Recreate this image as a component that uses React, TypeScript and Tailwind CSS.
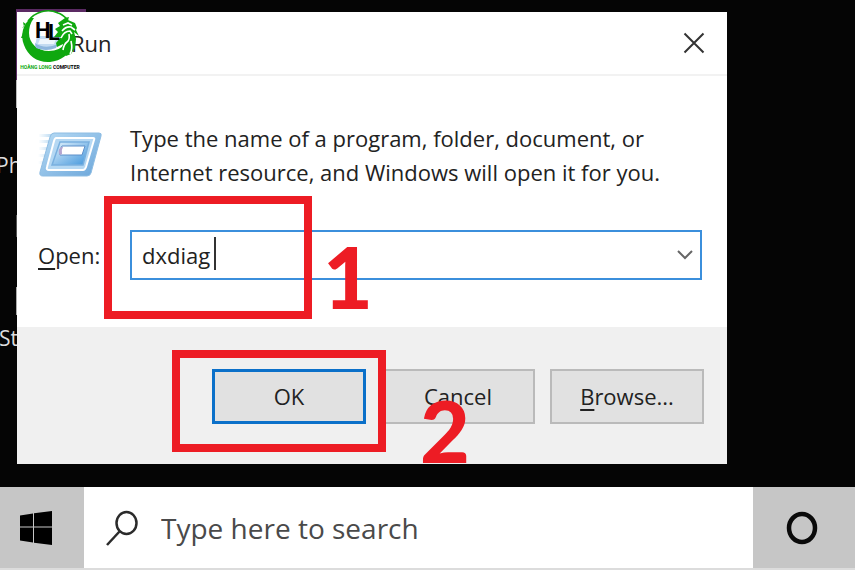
import { useState } from "react";
import type { ReactNode } from "react";

/** Green ring with the dragon head and the shop's initials. */
function ShopLogo() {
  return (
    <div className="pointer-events-none absolute left-[20px] top-[9px] z-20 flex w-[60px] flex-col items-center">
      <svg viewBox="0 0 60 54" className="h-[54px] w-[60px]" role="img" aria-label="Hoàng Long Computer">
        {/* ring */}
        <circle cx="29" cy="27" r="25" fill="#fff" />
        <path
          d="M11 9C3 15 0 26 4 36c4 11 14 18 26 17 11-1 20-8 23-18l-7-1c-4 5-10 8-17 8C17 42 9 34 9 24c0-5 1-10 5-15z"
          fill="#0fa80f"
        />
        <path d="M8 12C15 3 27-1 38 4c4 1 7 4 10 7" fill="none" stroke="#0fa80f" strokeWidth="1.500" />
        <path d="M6 15l-3-2 1 5-2 1zM3 24l-2 5 3 0z" fill="#0fa80f" />
        {/* Run icon showing through the ring */}
        <path d="M17 27h24l-4 10q-9 7-22 0z" fill="#c3dbf1" />
        <path d="M15 34q10 7 23 1l-2 4q-10 4-20 0z" fill="#8db6dd" />
        <path d="M20 30h16l-2 5H18z" fill="#eef6fc" />
        {/* dragon */}
        <path
          d="M38 14l7-5 4-1-1 3 7 3 2 5-1 2 3 6-5-4 2 7-1 9-4 6-5 2-5-4 2-8-6 3-1-4 5-6-7 0 4-5-3-3 5-3z"
          fill="#0fa80f"
        />
        <path
          d="M43 16l5-2 4 2M42 22q4-5 9-4l4 3M41 29q3-7 9-7l2 3M43 41q1-6 4-8t2-8M50 45q3-5 1-13"
          fill="none"
          stroke="#fff"
          strokeWidth="1.600"
        />
        {/* initials */}
        <text x="15" y="29" fontFamily="Liberation Sans Narrow, Roboto, sans-serif" fontSize="22" fontWeight="700" fill="#000">
          H
        </text>
        <text x="28" y="31" fontFamily="Liberation Sans Narrow, Roboto, sans-serif" fontSize="22" fontWeight="700" fill="#000">
          L
        </text>
      </svg>
      <span className="whitespace-nowrap font-['Liberation_Sans_Narrow',Roboto,sans-serif] text-[5px] font-bold leading-[8px] text-black">
        <span className="text-[#0fa80f]">HOÀNG LONG</span> COMPUTER
      </span>
    </div>
  );
}

function RunIcon() {
  return (
    <svg viewBox="0 0 64 48" className="h-[48px] w-[64px] shrink-0" aria-hidden="true">
      <defs>
        <linearGradient id="frame" x1="0" y1="0" x2="1" y2="1">
          <stop offset="0" stopColor="#b9dcf5" />
          <stop offset="1" stopColor="#6ba6da" />
        </linearGradient>
        <linearGradient id="panel" x1="0" y1="0" x2="1" y2="1">
          <stop offset="0" stopColor="#e6f3fc" />
          <stop offset="1" stopColor="#3f95dc" />
        </linearGradient>
        <linearGradient id="trail" x1="0" y1="0" x2="1" y2="0">
          <stop offset="0" stopColor="#a9d2f0" stopOpacity="0" />
          <stop offset="1" stopColor="#8abfe6" />
        </linearGradient>
      </defs>
      <path d="M1 3h20v3H1zM1 9h18v3H1zM1 16h16v3H1zM0 23h14v3H0zM0 30h10v3H0z" fill="url(#trail)" />
      <path d="M16 2h45q3 0 2 3L53 42q-1 3-4 3H5q-4 0-3-4L12 6q1-4 4-4z" fill="url(#frame)" stroke="#8ebde3" />
      <path d="M18 7h37q2 0 1 2L48 36q-1 3-3 3H11q-3 0-2-3l7-26q1-3 2-3z" fill="#b5d8f3" stroke="#fff" strokeWidth="2" />
      <path d="M22 11h29l-6 23H14z" fill="url(#panel)" stroke="#79b0df" strokeWidth="1.500" />
      <path d="M24 15h23l-3 9H22q-2-4 2-9z" fill="#fff" stroke="#5d8fc9" />
      <path d="M23 16q-4 4-1 8l2-1q-1-4 1-7z" fill="#b4a5d0" />
    </svg>
  );
}

function DialogButton({ children, primary = false }: { children: ReactNode; primary?: boolean }) {
  return (
    <button
      type="button"
      className={`h-[55px] w-[154px] bg-[#e1e1e1] text-[22px] text-[#222] ${
        primary ? "border-3 border-[#0b70c9]" : "border-2 border-[#bababa]"
      }`}
    >
      {children}
    </button>
  );
}

function RunDialog() {
  const [command, setCommand] = useState("dxdiag");

  return (
    <section role="dialog" aria-label="Run" className="relative z-10 min-w-0 flex-1 bg-white text-[#222]">
      <header className="flex h-[64px] items-center justify-between border-b-2 border-[#f2f2f2] pl-[54px] pr-[22px]">
        <h1 className="text-[22px]">Run</h1>
        <button type="button" aria-label="Close">
          <svg viewBox="0 0 22 22" className="h-[22px] w-[22px]" fill="none" stroke="#333" strokeWidth="2">
            <path d="M1.500 1.500l19 19M20.500 1.500l-19 19" />
          </svg>
        </button>
      </header>

      <div className="px-[21px] pb-[47px] pt-[45px]">
        <div className="flex items-center gap-[28px]">
          <RunIcon />
          <p className="text-[22px] leading-[34px]">
            Type the name of a program, folder, document, or
            <br />
            Internet resource, and Windows will open it for you.
          </p>
        </div>
        <div className="mt-[41px] flex items-center pr-[4px]">
          <label htmlFor="command" className="w-[92px] shrink-0 text-[22px]">
            <u className="underline-offset-4">O</u>pen:
          </label>
          <div className="relative flex h-[50px] min-w-0 flex-1 items-center border-2 border-[#3b8fdc] bg-white">
            <input
              id="command"
              value={command}
              onChange={(e) => setCommand(e.target.value)}
              className="min-w-0 flex-1 bg-transparent pl-[10px] text-[22px] outline-none"
            />
            <span className="absolute left-[82px] top-[5px] h-[33px] w-[2px] bg-[#333]" />
            <button type="button" aria-label="Show recent commands" className="px-[7px]">
              <svg viewBox="0 0 16 10" className="h-[10px] w-[16px]" fill="none" stroke="#666" strokeWidth="2">
                <path d="M1 1l7 7 7-7" />
              </svg>
            </button>
            {/* step 1 */}
            <div className="pointer-events-none absolute -left-[28px] -top-[36px] h-[123px] w-[208px] border-8 border-[#ed1c24]" />
            <span className="pointer-events-none absolute left-[191px] top-0 font-[Lato] text-[86px] font-black leading-[88px] text-[#ed1c24]">
              1
            </span>
          </div>
        </div>
      </div>

      <footer className="flex justify-end gap-[15px] bg-[#f0f0f0] pb-[40px] pl-[21px] pr-[23px] pt-[42px]">
        <div className="relative z-10">
          <DialogButton primary>OK</DialogButton>
          {/* step 2 */}
          <div className="pointer-events-none absolute -bottom-[28px] -left-[40px] -right-[20px] -top-[19px] border-8 border-[#ed1c24]" />
        </div>
        <div className="relative">
          <DialogButton>Cancel</DialogButton>
          <span className="pointer-events-none absolute left-[39px] top-[17px] font-[Lato] text-[86px] font-black leading-[88px] text-[#ed1c24]">
            2
          </span>
        </div>
        <DialogButton>
          <u className="underline-offset-4">B</u>rowse...
        </DialogButton>
      </footer>
    </section>
  );
}

function Taskbar() {
  return (
    <nav className="flex h-[83px] border-b-2 border-[#dcdcdc] bg-[#c6c6c6]">
      <button type="button" aria-label="Start" className="flex w-[84px] shrink-0 items-center pl-[20px]">
        <svg viewBox="0 0 32 36" className="h-[36px] w-[32px]">
          <path d="M0 5.500L13 3.500V16.500H0zM14 3.200L32 1V16.500H14zM0 17.500H13V32.500L0 30.500zM14 17.500H32V35L14 32.800z" fill="#000" />
        </svg>
      </button>
      <label className="flex min-w-0 flex-1 items-center bg-white pl-[21px]">
        <svg viewBox="0 0 34 36" className="h-[36px] w-[34px] shrink-0" fill="none" stroke="#2b2b2b" strokeWidth="2.500">
          <ellipse cx="21.500" cy="13" rx="10" ry="11" />
          <path d="M14.500 21.500L2 35" />
        </svg>
        <input
          type="search"
          aria-label="Search"
          placeholder="Type here to search"
          className="ml-[22px] min-w-0 flex-1 bg-transparent text-[28px] text-[#444] outline-none placeholder:text-[#4a4a4a]"
        />
      </label>
      <button type="button" aria-label="Cortana" className="flex w-[102px] shrink-0 items-center pl-[33px]">
        <svg viewBox="0 0 32 34" className="h-[34px] w-[32px]" fill="none" stroke="#0a0a0a" strokeWidth="4.500">
          <ellipse cx="16" cy="17" rx="13" ry="14" />
        </svg>
      </button>
    </nav>
  );
}

export default function App() {
  return (
    <main className="relative flex min-h-screen flex-col bg-[#050505] font-['Open_Sans',sans-serif]">
      <div className="relative flex flex-1 items-start pr-[128px] pt-[12px]">
        {/* desktop shortcuts, mostly hidden by the dialog */}
        <div className="flex w-[17px] shrink-0 flex-col overflow-hidden whitespace-nowrap text-[21px] leading-[28px] text-[#ddd]">
          <div className="ml-[16px] h-[68px] bg-[#5b2a63]" />
          <div className="ml-[16px] h-[28px] bg-[#bbb]" />
          <span className="-ml-[4px] mt-[43px]">Ph</span>
          <div className="ml-[16px] mt-[36px] h-[22px] bg-[#555]" />
          <div className="ml-[16px] mt-[50px] h-[28px] bg-[#aaa]" />
          <span className="-ml-[1px] mt-[9px]">St</span>
        </div>
        <RunDialog />
        <div className="absolute left-[16px] top-[9px] h-[3px] w-[70px] bg-[#5b2a63]" />
        <ShopLogo />
      </div>
      <Taskbar />
    </main>
  );
}
